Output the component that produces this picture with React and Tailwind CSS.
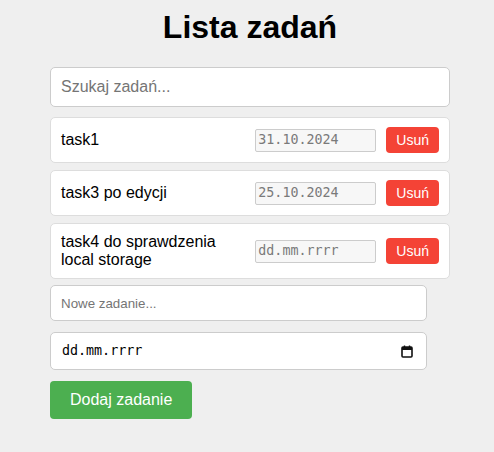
const tasks = [
  { id: 1, text: "task1", date: "31.10.2024" },
  { id: 3, text: "task3 po edycji", date: "25.10.2024" },
  { id: 4, text: "task4 do sprawdzenia local storage", date: "dd.mm.rrrr" },
];

const CalendarIcon = () => (
  <svg width="12" height="13" viewBox="0 0 12 13" fill="none">
    <rect x="1" y="2" width="10" height="10" rx="1" stroke="#111" strokeWidth="1.6" />
    <rect x="1" y="2" width="10" height="3" fill="#111" />
    <line x1="3.5" y1="0.5" x2="3.5" y2="2.5" stroke="#111" strokeWidth="1.4" />
    <line x1="8.5" y1="0.5" x2="8.5" y2="2.5" stroke="#111" strokeWidth="1.4" />
  </svg>
);

const TaskItem = ({ task }) => (
  <li className="flex items-center gap-[10px] bg-white border border-[#dddddd] rounded-[5px] py-[9px] pl-[10px] pr-[10px]">
    <span className="flex-1 text-[16px] leading-[18px] text-black">{task.text}</span>
    <div className="w-[121px] h-[23px] flex items-center px-[2px] bg-[#f7f7f7] border border-[#cccccc] rounded-[2px] text-[13.33px] text-[#7a7a7a] font-['DejaVu_Sans_Mono',monospace]">
      {task.date}
    </div>
    <button
      type="button"
      className="h-[26px] px-[10px] bg-[#f44336] text-white text-[14px] leading-[16px] rounded-[4px]"
    >
      Usuń
    </button>
  </li>
);

export default function App() {
  return (
    <div className="min-h-[452px] bg-[#efefef] font-['Liberation_Sans',Arial,sans-serif] pt-[9px]">
      <div className="w-[400px] ml-[50px]">
        <h1 className="text-[32px] leading-[37px] font-bold text-center text-black mb-[21px]">
          Lista zadań
        </h1>
        <input
          type="text"
          placeholder="Szukaj zadań..."
          className="block w-full h-[40px] px-[10px] bg-white border border-[#cccccc] rounded-[5px] text-[16px] placeholder:text-[#757575] outline-none"
        />
        <ul className="flex flex-col gap-[7px] mt-[10px]">
          {tasks.map((t) => (
            <TaskItem key={t.id} task={t} />
          ))}
        </ul>
        <div className="flex flex-col items-start gap-[11px] mt-[6px]">
          <input
            type="text"
            placeholder="Nowe zadanie..."
            className="block w-[377px] h-[36px] px-[10px] bg-white border border-[#cccccc] rounded-[5px] text-[13.33px] placeholder:text-[#757575] outline-none"
          />
          <div className="w-[377px] h-[38px] flex items-center justify-between pl-[11px] pr-[13px] bg-white border border-[#cccccc] rounded-[5px] text-[13.33px] text-black font-['DejaVu_Sans_Mono',monospace]">
            <span>dd.mm.rrrr</span>
            <CalendarIcon />
          </div>
          <button
            type="button"
            className="h-[38px] px-[20px] bg-[#4caf50] text-white text-[16px] rounded-[4px]"
          >
            Dodaj zadanie
          </button>
        </div>
      </div>
    </div>
  );
}
